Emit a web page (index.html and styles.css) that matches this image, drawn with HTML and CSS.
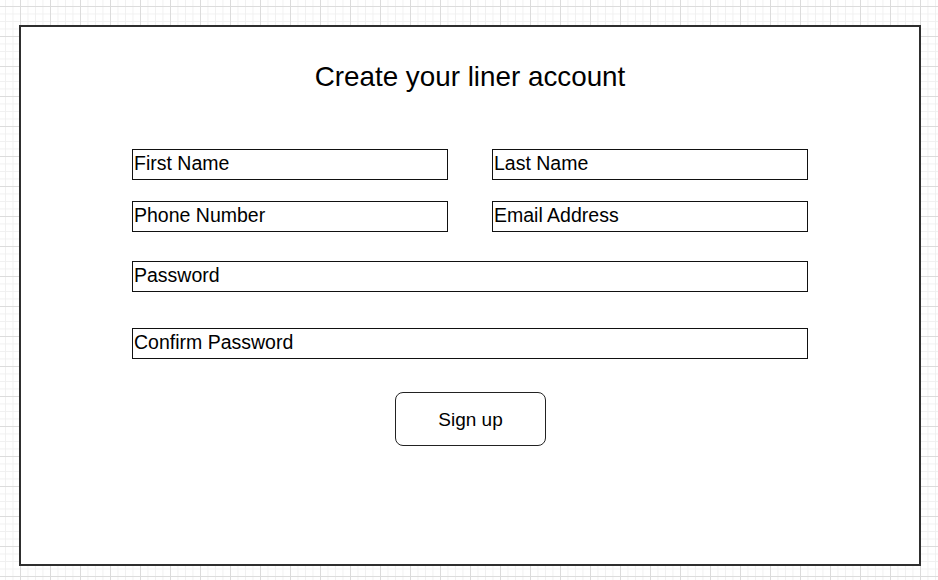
FILE: index.html
```html
<!DOCTYPE html>
<html lang="en">
<head>
<meta charset="utf-8">
<title>Create your liner account</title>
<link rel="stylesheet" href="styles.css">
</head>
<body>
  <main class="card">
    <h1 class="title">Create your liner account</h1>
    <form class="form">
      <div class="row-pair">
        <div class="field">First Name</div>
        <div class="field">Last Name</div>
      </div>
      <div class="row-pair gap-sm">
        <div class="field">Phone Number</div>
        <div class="field">Email Address</div>
      </div>
      <div class="field gap-md">Password</div>
      <div class="field gap-lg">Confirm Password</div>
      <div class="actions">
        <button type="button" class="btn">Sign up</button>
      </div>
    </form>
  </main>
</body>
</html>
```

FILE: styles.css
```css
* { box-sizing: border-box; }

html, body {
  margin: 0;
  height: 100%;
}

body {
  font-family: "Liberation Sans", Arial, sans-serif;
  color: #000;
  background-color: #fff;
  background-image:
    linear-gradient(to right, #dcdcdc 1px, transparent 1px),
    linear-gradient(to bottom, #dcdcdc 1px, transparent 1px),
    linear-gradient(to right, #f0f0f0 1px, transparent 1px),
    linear-gradient(to bottom, #f0f0f0 1px, transparent 1px);
  background-size: 30px 30px, 30px 30px, 7.5px 7.5px, 7.5px 7.5px;
  background-position: 20px 6px, 20px 6px, 5px 6px, 5px 6px;
  padding: 25px 0 0 19px;
  overflow: hidden;
}

.card {
  width: 902px;
  height: 541px;
  background: #fff;
  border: 2px solid #2e2e2e;
  padding-top: 34px;
}

.title {
  margin: 0;
  font-weight: normal;
  font-size: 27.8px;
  line-height: 32px;
  text-align: center;
  padding-right: 0;
}

.form {
  width: 676px;
  margin: 56px auto 0;
  display: flex;
  flex-direction: column;
}

.row-pair {
  display: grid;
  grid-template-columns: 316px 316px;
  column-gap: 44px;
}

.gap-sm { margin-top: 21px; }
.gap-md { margin-top: 29px; }
.gap-lg { margin-top: 36px; }

.field {
  height: 31px;
  border: 1px solid #111;
  padding-left: 1px;
  font-size: 19.5px;
  line-height: 27px;
  white-space: nowrap;
}

.actions {
  margin-top: 33px;
  display: flex;
  justify-content: center;
  padding-left: 1px;
}

.btn {
  width: 151px;
  height: 54px;
  border: 1px solid #222;
  border-radius: 8px;
  background: #fff;
  font-family: "Liberation Sans", Arial, sans-serif;
  font-size: 19px;
  color: #000;
  padding: 1px 0 0;
  display: flex;
  align-items: center;
  justify-content: center;
}
```
